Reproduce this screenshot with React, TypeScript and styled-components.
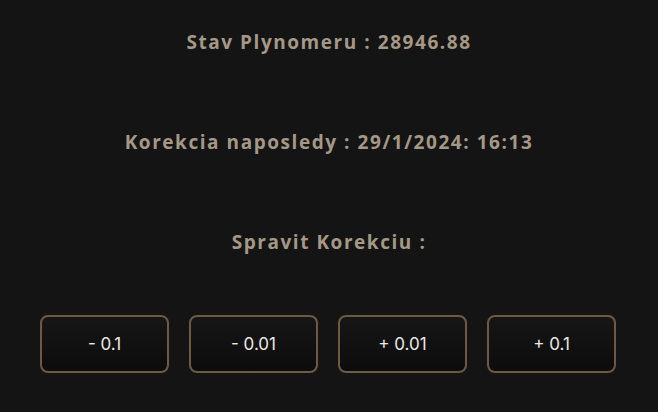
import React from "react";
import styled, { createGlobalStyle } from "styled-components";

const GlobalStyle = createGlobalStyle`
  html, body {
    margin: 0;
    padding: 0;
    background-color: #141414;
  }
`;

const Page = styled.div`
  width: 658px;
  height: 412px;
  display: flex;
  flex-direction: column;
  align-items: center;
  background-color: #141414;
  padding-top: 17px;
  box-sizing: border-box;
`;

const Label = styled.div`
  height: 100px;
  line-height: 50px;
  font-family: "Open Sans", "Noto Sans", sans-serif;
  font-weight: 700;
  font-size: 19px;
  letter-spacing: 1.55px;
  color: #a59886;
  text-align: center;
`;

const ButtonRow = styled.div`
  display: flex;
  gap: 20px;
  margin-top: -2px;
  margin-right: 2px;
`;

const StepButton = styled.button`
  width: 129px;
  height: 58px;
  box-sizing: border-box;
  border: 2px solid #6e5a42;
  border-radius: 8px;
  background: linear-gradient(180deg, #161616 0%, #0c0c0c 100%);
  color: #ebe8e4;
  font-family: "Inter", "Roboto", sans-serif;
  font-size: 17px;
  cursor: pointer;
`;

const steps = ["- 0.1", "- 0.01", "+ 0.01", "+ 0.1"];

export default function App() {
  return (
    <>
      <GlobalStyle />
      <Page>
        <Label>Stav Plynomeru : 28946.88</Label>
        <Label>Korekcia naposledy : 29/1/2024: 16:13</Label>
        <Label>Spravit Korekciu :</Label>
        <ButtonRow>
          {steps.map((s) => (
            <StepButton key={s}>{s}</StepButton>
          ))}
        </ButtonRow>
      </Page>
    </>
  );
}
